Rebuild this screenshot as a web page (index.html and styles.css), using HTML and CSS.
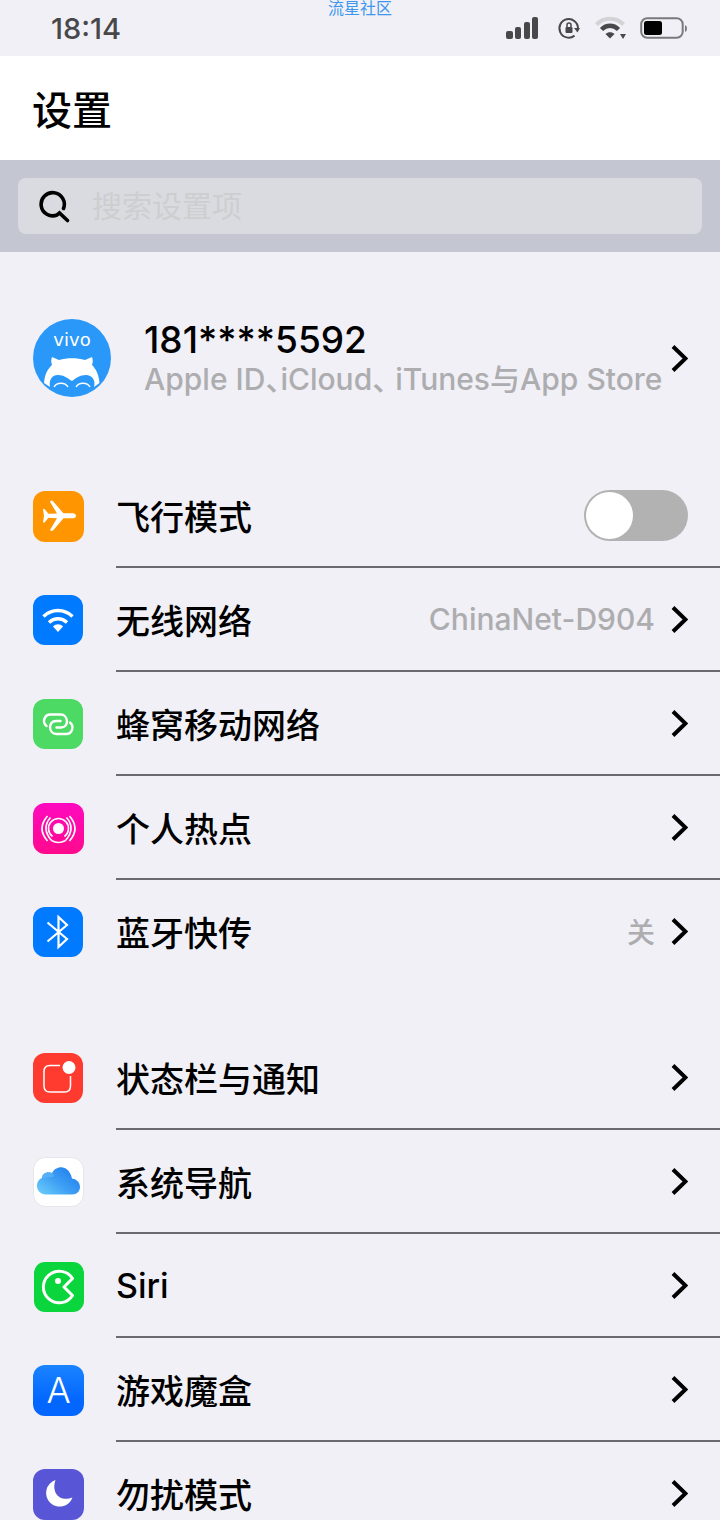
FILE: index.html
```html
<!DOCTYPE html>
<html lang="zh-CN">
<head>
  <meta charset="UTF-8">
  <title>设置</title>
  <meta name="viewport" content="width=device-width, initial-scale=1.0">
  <link rel="stylesheet" href="styles.css">
</head>
<body>

  <!-- shared shapes -->
  <svg class="defs" width="0" height="0" aria-hidden="true">
    <symbol id="chevron" viewBox="0 0 18 28">
      <path d="M3 2.500l12.500 12L3 26.500" fill="none" stroke="#000" stroke-width="4"/>
    </symbol>
  </svg>

  <div class="status-bar">
    <span class="time">18:14</span>
    <span class="community">流星社区</span>
    <div class="status-icons">
      <svg width="36" height="24" viewBox="0 0 36 24" fill="#48484a">
        <rect x="0" y="15" width="7" height="8" rx="2"/>
        <rect x="9" y="11" width="6" height="12" rx="2"/>
        <rect x="18" y="6" width="6" height="17" rx="2"/>
        <rect x="26" y="1" width="6" height="22" rx="2"/>
      </svg>
      <svg width="24" height="24" viewBox="0 0 24 24">
        <path d="M18.500 19.600A9.300 9.300 0 1 1 22 12.500" fill="none" stroke="#48484a" stroke-width="2"/>
        <path d="M18 12h6l-2.500 4.500z" fill="#48484a"/>
        <rect x="9.500" y="11" width="7" height="6" rx="1" fill="#48484a"/>
        <path d="M11 11V9a2 2 0 0 1 4 0v2" fill="none" stroke="#48484a" stroke-width="1.500"/>
      </svg>
      <svg width="32" height="24" viewBox="0 0 32 24">
        <path d="M2.500 8.500C10 .8 22 .8 29.500 8.500" fill="none" stroke="#d3d3d6" stroke-width="4"/>
        <path d="M7.500 13.500c5-5 12-5 17 0" fill="none" stroke="#48484a" stroke-width="4.500"/>
        <path d="M16 22.500l-4.500-4.500c2.500-2.200 6.500-2.200 9 0zM26 18h6l-3 5z" fill="#48484a"/>
      </svg>
      <svg width="48" height="24" viewBox="0 0 48 24">
        <rect x="1.200" y="2.200" width="41.500" height="19.600" rx="6" fill="none" stroke="#7a7a7d" stroke-width="2"/>
        <rect x="4" y="5" width="18" height="14" rx="2.500" fill="#000"/>
        <path d="M45 9q2 .8 2 3.500T45 16z" fill="#7a7a7d"/>
      </svg>
    </div>
  </div>

  <header>
    <h1>设置</h1>
  </header>

  <form class="search">
    <label class="search-box">
      <svg width="34" height="34" viewBox="0 0 34 34" fill="none" stroke="#000" stroke-width="3.6" stroke-linecap="round">
        <path d="M25.500 19.500A11.600 11.600 0 1 0 19 26L21.500 24L29.500 31.500"/>
      </svg>
      <input type="text" placeholder="搜索设置项" aria-label="搜索设置项">
    </label>
  </form>

  <main>
    <a class="profile" href="#">
      <svg class="avatar" viewBox="0 0 78 78">
        <circle cx="39" cy="39" r="39" fill="#2a98f8"/>
        <text class="avatar-text" x="39" y="27" text-anchor="middle">vivo</text>
        <path d="M11 64C12 55 14 51 19 46C18 43 18 41 19 38L26 41C34 38.500 44 38.500 52 41L59 38C60 41 60 43 59 46C63 50 66 56 66.500 64L61 68C63 61 59 56 53 56C47 56 43 59 39 62C34 59 31 56 25 56C18 56 16 62 17 68Z" fill="#fff"/>
        <path d="M21 68c3-5 11-5 14 0M43 68c3-5 11-5 14 0" fill="none" stroke="#fff" stroke-width="1.300"/>
      </svg>
      <span class="profile-text">
        <span class="phone">181****5592</span>
        <span class="services">Apple ID<span class="comma">、</span>iCloud<span class="comma">、</span> iTunes与App Store</span>
      </span>
      <svg class="chevron"><use href="#chevron"/></svg>
    </a>

    <ul class="group">
      <li>
        <label class="row" for="airplane">
          <svg class="icon" viewBox="0 0 51 51">
            <rect width="51" height="51" rx="12" fill="#ff9500"/>
            <path d="M10 18h1.500l4 4.800L24 22.500 17 10.800q1.200-2 3-.6L30.500 22.300H40.500q2.500.5 2.500 2.500t-2.500 2.500h-10L20 39.500q-1.800 1.200-3-.6L24 27.200l-8.500-.4-4 4.700H10l1-6.700z" fill="#fff"/>
          </svg>
          <span class="row-body">
            <span class="name">飞行模式</span>
            <input type="checkbox" class="toggle" id="airplane">
          </span>
        </label>
      </li>
      <li>
        <a class="row" href="#">
          <svg class="icon" viewBox="0 0 51 51">
            <rect width="50" height="50" rx="12" fill="#007aff"/>
            <path d="M10.500 21.500C18.500 13.500 31.500 13.500 39.500 21.500M16 27.500C21.500 22.500 28.500 22.500 34 27.500" fill="none" stroke="#fff" stroke-width="3.400"/>
            <path d="M25 37l-5-5.500c3-3 7-3 10 0z" fill="#fff"/>
          </svg>
          <span class="row-body">
            <span class="name">无线网络</span>
            <span class="value">ChinaNet-D904</span>
            <svg class="chevron"><use href="#chevron"/></svg>
          </span>
        </a>
      </li>
      <li>
        <a class="row" href="#">
          <svg class="icon" viewBox="0 0 51 51">
            <rect width="50" height="50" rx="12" fill="#4cd964"/>
            <path d="M13.500 27C9 23.500 11 15.500 17.500 15.500H27.500C35.500 15.500 36.500 28.500 28 28.500H23.500M37 23.500C41.500 27 39.500 35 33 35H23.500C15.500 35 14.500 22 23 22H27.500" fill="none" stroke="#fff" stroke-width="2.400" stroke-linecap="round"/>
          </svg>
          <span class="row-body">
            <span class="name">蜂窝移动网络</span>
            <svg class="chevron"><use href="#chevron"/></svg>
          </span>
        </a>
      </li>
      <li>
        <a class="row" href="#">
          <svg class="icon" viewBox="0 0 51 51">
            <defs>
              <linearGradient id="pink" x1="0" y1="0" x2="0" y2="1">
                <stop offset="0" stop-color="#ff0ac0"/>
                <stop offset="1" stop-color="#ff0a8c"/>
              </linearGradient>
            </defs>
            <rect width="51" height="51" rx="12" fill="url(#pink)"/>
            <circle cx="25.500" cy="25.500" r="5.500" fill="#fff"/>
            <g fill="none" stroke="#fff" stroke-width="1.600">
              <path d="M19.500 33.500A10 10 0 1 1 31.500 33.500M18.500 37.500Q25.500 41.500 32.500 37.500"/>
              <path d="M17.500 14.500Q8 25.500 18.500 37.500M33.500 14.500Q43 25.500 32.500 37.500M14.500 13Q3.500 25.500 14.500 38M36.500 13Q47.500 25.500 36.500 38"/>
            </g>
          </svg>
          <span class="row-body">
            <span class="name">个人热点</span>
            <svg class="chevron"><use href="#chevron"/></svg>
          </span>
        </a>
      </li>
      <li>
        <a class="row" href="#">
          <svg class="icon" viewBox="0 0 51 51">
            <rect width="50" height="50" rx="12" fill="#007aff"/>
            <path d="M14.500 15.500L34 32 25.500 40V10L34 18 14.500 34.500" fill="none" stroke="#fff" stroke-width="2.200"/>
          </svg>
          <span class="row-body">
            <span class="name">蓝牙快传</span>
            <span class="value state">关</span>
            <svg class="chevron"><use href="#chevron"/></svg>
          </span>
        </a>
      </li>
    </ul>

    <ul class="group">
      <li>
        <a class="row" href="#">
          <svg class="icon" viewBox="0 0 51 51">
            <rect width="50" height="50" rx="12" fill="#ff3b30"/>
            <path d="M27 12.500H17q-6 0-6 6V33q0 6 6 6h14.500q6 0 6-6V23" fill="none" stroke="#fff" stroke-width="1.500"/>
            <circle cx="36" cy="14.500" r="6.500" fill="#fff"/>
          </svg>
          <span class="row-body">
            <span class="name">状态栏与通知</span>
            <svg class="chevron"><use href="#chevron"/></svg>
          </span>
        </a>
      </li>
      <li>
        <a class="row" href="#">
          <svg class="icon" viewBox="0 0 51 51">
            <defs>
              <linearGradient id="cloud" x1="0" y1="1" x2="1" y2="0.200">
                <stop offset="0" stop-color="#6fd0fb"/>
                <stop offset="0.500" stop-color="#3fa0f4"/>
                <stop offset="1" stop-color="#1f7cee"/>
              </linearGradient>
            </defs>
            <rect x="0.500" y="0.500" width="50" height="49" rx="12" fill="#fff" stroke="#e6e6ea"/>
            <path d="M13 37.500C7 37.500 4 33 4 29c0-4 2-7 5-8 0-5 6-7 10-5 4-8 17-9 20 5.500 5 1 8 4 8 8.500 0 4-3 7.500-8 7.500z" fill="url(#cloud)"/>
            <path d="M9 21c0-5 6-7 10-5 2 1 2 3 1 4" fill="#5fb4f7" fill-opacity="0.700"/>
          </svg>
          <span class="row-body">
            <span class="name">系统导航</span>
            <svg class="chevron"><use href="#chevron"/></svg>
          </span>
        </a>
      </li>
      <li>
        <a class="row" href="#">
          <svg class="icon" viewBox="0 0 51 51">
            <rect x="1" y="1" width="50" height="50" rx="11" fill="#0bd53c"/>
            <path d="M39.500 17.500A15.800 15.800 0 1 0 39.500 34.500L31 26z" fill="none" stroke="#fff" stroke-width="3" stroke-linejoin="round"/>
            <circle cx="25" cy="20" r="3" fill="#fff"/>
          </svg>
          <span class="row-body">
            <span class="name">Siri</span>
            <svg class="chevron"><use href="#chevron"/></svg>
          </span>
        </a>
      </li>
      <li>
        <a class="row" href="#">
          <svg class="icon" viewBox="0 0 51 51">
            <defs>
              <linearGradient id="blue" x1="0" y1="0" x2="0" y2="1">
                <stop offset="0" stop-color="#1a84ff"/>
                <stop offset="0.700" stop-color="#0366ff"/>
              </linearGradient>
            </defs>
            <rect width="51" height="51" rx="12" fill="url(#blue)"/>
            <text class="store-letter" x="25.500" y="38" text-anchor="middle">A</text>
          </svg>
          <span class="row-body">
            <span class="name">游戏魔盒</span>
            <svg class="chevron"><use href="#chevron"/></svg>
          </span>
        </a>
      </li>
      <li>
        <a class="row" href="#">
          <svg class="icon" viewBox="0 0 51 51">
            <rect width="51" height="51" rx="12" fill="#5856d6"/>
            <path d="M22.500 11A13.600 13.600 0 1 0 39.500 28.500C27 33.500 18 24 22.500 11z" fill="#fff"/>
          </svg>
          <span class="row-body">
            <span class="name">勿扰模式</span>
            <svg class="chevron"><use href="#chevron"/></svg>
          </span>
        </a>
      </li>
    </ul>
  </main>

</body>
</html>
```
FILE: styles.css
```css
* {
  box-sizing: border-box;
}
body {
  margin: 0;
  height: 100vh;
  display: flex;
  flex-direction: column;
  overflow: hidden;
  font-family: Inter, "Noto Sans CJK SC", sans-serif;
  font-weight: 500;
  background-color: #f1f0f7;
  color: #000;
}
a {
  color: inherit;
  text-decoration: none;
}
svg {
  display: block;
  flex: none;
}
.defs {
  position: absolute;
}

/* status bar */
.status-bar {
  position: relative;
  flex: none;
  display: flex;
  align-items: center;
  justify-content: space-between;
  height: 56px;
  padding: 0 32px 0 51px;
}
.time {
  font-size: 29px;
  color: #48484a;
}
.community {
  position: absolute;
  top: 0;
  left: 0;
  right: 0;
  text-align: center;
  font-size: 16px;
  line-height: 16px;
  font-weight: 400;
  color: #3d97ee;
}
.status-icons {
  display: flex;
  align-items: center;
  gap: 14px;
}

header {
  flex: none;
  display: flex;
  align-items: center;
  height: 104px;
  padding: 6px 32px 0;
  background-color: #fff;
}
h1 {
  margin: 0;
  font-size: 40px;
  line-height: 52px;
  font-weight: 500;
}

/* search */
.search {
  flex: none;
  padding: 18px;
  background-color: #c4c7d1;
}
.search-box {
  display: flex;
  align-items: center;
  gap: 20px;
  height: 56px;
  padding: 0 20px;
  border-radius: 8px;
  background-color: #d9dbe1;
}
.search-box input {
  flex: 1;
  min-width: 0;
  padding: 0;
  border: none;
  outline: none;
  background: none;
  font: inherit;
  font-size: 30px;
  font-weight: 400;
}
.search-box input::placeholder {
  color: #cdcecf;
}

main {
  flex: 1;
  min-height: 0;
  overflow-y: auto;
  scrollbar-width: none;
}

/* profile */
.profile {
  display: flex;
  align-items: center;
  height: 212px;
  padding: 0 32px 0 33px;
}
.avatar {
  width: 78px;
  height: 78px;
  margin-right: 33px;
}
.avatar-text {
  font-family: "DejaVu Sans", sans-serif;
  font-size: 18px;
  font-weight: 400;
  fill: #fff;
}
.profile-text {
  flex: 1;
  min-width: 0;
  white-space: nowrap;
}
.phone {
  display: block;
  font-size: 37px;
  line-height: 42px;
}
.services {
  display: block;
  font-size: 30px;
  line-height: 36px;
  color: #adadaf;
}
.comma {
  font-family: "Noto Sans CJK SC", sans-serif;
  font-feature-settings: "halt";
  line-height: 1;
}

/* rows */
.group {
  list-style: none;
  margin: 0 0 42px;
  padding: 0;
}
.row {
  display: flex;
  height: 104px;
  padding-left: 33px;
  align-items: center;
}
.icon {
  width: 51px;
  height: 51px;
  margin-right: 32px;
}
.row-body {
  flex: 1;
  display: flex;
  align-items: center;
  height: 104px;
  padding-right: 32px;
  border-bottom: 2px solid #6b6a70;
}
.group li:last-child .row-body {
  border-bottom-color: transparent;
}
.name {
  flex: 1;
  font-size: 34px;
}
.value {
  margin-right: 15px;
  font-size: 30px;
  color: #adadaf;
}
.state {
  font-size: 28px;
}
.chevron {
  width: 18px;
  height: 28px;
}
.toggle {
  appearance: none;
  width: 104px;
  height: 51px;
  margin: 0;
  padding: 2px;
  border-radius: 26px;
  background-color: #b2b2b2;
}
.toggle::before {
  content: "";
  display: block;
  width: 47px;
  height: 47px;
  border-radius: 50%;
  background-color: #fff;
}
.toggle:checked {
  background-color: #4cd964;
}
.toggle:checked::before {
  margin-left: auto;
}
.store-letter {
  font-size: 36px;
  font-weight: 300;
  fill: #fff;
}
```
